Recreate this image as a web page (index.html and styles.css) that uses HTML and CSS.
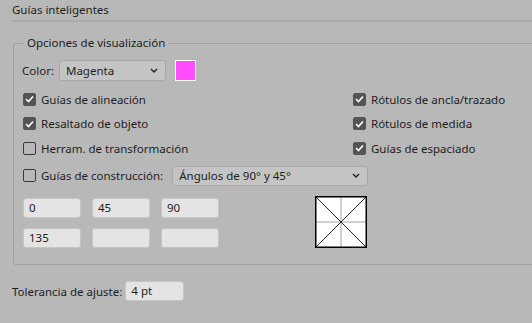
FILE: index.html
```html
<!DOCTYPE html>
<html lang="es">
<head>
    <meta charset="UTF-8">
    <title>Guías inteligentes</title>
    <link rel="stylesheet" href="styles.css">
</head>
<body>
    <div class="panel">
        <div class="section-title">Guías inteligentes</div>

        <fieldset class="group">
            <legend>Opciones de visualización</legend>

            <div class="color-row">
                <span class="label">Color:</span>
                <div class="select select-color">
                    <span>Magenta</span>
                    <svg class="chevron" width="8" height="5" viewBox="0 0 8 5"><path d="M1 1l3 3 3-3" fill="none" stroke="#222" stroke-width="1.4"/></svg>
                </div>
                <span class="swatch"></span>
            </div>

            <div class="checks">
                <div class="check-col">
                    <label class="check-row"><span class="box checked"><svg width="9" height="8" viewBox="0 0 9 8"><path d="M1 4l2.5 2.5L8 1.5" fill="none" stroke="#fff" stroke-width="1.6"/></svg></span>Guías de alineación</label>
                    <label class="check-row"><span class="box checked"><svg width="9" height="8" viewBox="0 0 9 8"><path d="M1 4l2.5 2.5L8 1.5" fill="none" stroke="#fff" stroke-width="1.6"/></svg></span>Resaltado de objeto</label>
                    <label class="check-row"><span class="box"></span>Herram. de transformación</label>
                </div>
                <div class="check-col">
                    <label class="check-row"><span class="box checked"><svg width="9" height="8" viewBox="0 0 9 8"><path d="M1 4l2.5 2.5L8 1.5" fill="none" stroke="#fff" stroke-width="1.6"/></svg></span>Rótulos de ancla/trazado</label>
                    <label class="check-row"><span class="box checked"><svg width="9" height="8" viewBox="0 0 9 8"><path d="M1 4l2.5 2.5L8 1.5" fill="none" stroke="#fff" stroke-width="1.6"/></svg></span>Rótulos de medida</label>
                    <label class="check-row"><span class="box checked"><svg width="9" height="8" viewBox="0 0 9 8"><path d="M1 4l2.5 2.5L8 1.5" fill="none" stroke="#fff" stroke-width="1.6"/></svg></span>Guías de espaciado</label>
                </div>
            </div>

            <div class="construct-row">
                <label class="check-row"><span class="box"></span>Guías de construcción:</label>
                <div class="select select-angles">
                    <span>Ángulos de 90° y 45°</span>
                    <svg class="chevron" width="8" height="5" viewBox="0 0 8 5"><path d="M1 1l3 3 3-3" fill="none" stroke="#222" stroke-width="1.4"/></svg>
                </div>
            </div>

            <div class="angles">
                <div class="angle-grid">
                    <div class="field">0</div>
                    <div class="field">45</div>
                    <div class="field">90</div>
                    <div class="field">135</div>
                    <div class="field"></div>
                    <div class="field"></div>
                </div>
                <svg class="preview" width="52" height="52" viewBox="0 0 52 52">
                    <rect x="0" y="0" width="52" height="52" fill="#fff"/>
                    <line x1="26" y1="1" x2="26" y2="51" stroke="#c2c2c2" stroke-width="1.5"/>
                    <line x1="1" y1="26" x2="51" y2="26" stroke="#c2c2c2" stroke-width="1.5"/>
                    <line x1="1" y1="1" x2="51" y2="51" stroke="#111" stroke-width="0.9"/>
                    <line x1="51" y1="1" x2="1" y2="51" stroke="#111" stroke-width="0.9"/>
                    <rect x="0.75" y="0.75" width="50.5" height="50.5" fill="none" stroke="#000" stroke-width="1.5"/>
                </svg>
            </div>
        </fieldset>

        <div class="tolerance-row">
            <span class="label">Tolerancia de ajuste:</span>
            <div class="field field-tol">4 pt</div>
        </div>
    </div>
</body>
</html>
```

FILE: styles.css
```css
body {
    margin: 0;
    background-color: #b8b8b8;
    font-family: "Noto Sans", sans-serif;
    font-size: 11.5px;
    color: #1e1e1e;
    overflow: hidden;
}
.panel {
    padding: 2px 0 0 12px;
}
.section-title {
    height: 18px;
    line-height: 16px;
    border-bottom: 2px solid #a9a9a9;
}
.group {
    margin: 14px -10px 0 1px;
    padding: 10px 0 16px 8px;
    border: 1px solid #a3a3a3;
    border-radius: 3px;
}
.group legend {
    padding: 0 3px;
    margin-left: 2px;
    line-height: 14px;
}
.color-row {
    display: flex;
    align-items: center;
    height: 21px;
}
.label {
    margin-right: 5px;
}
.select {
    display: flex;
    align-items: center;
    justify-content: space-between;
    height: 19px;
    padding: 0 7px 0 6px;
    background-color: #c4c4c4;
    border: 1px solid #a9a9a9;
    border-radius: 3px;
    box-sizing: border-box;
}
.select-color {
    width: 107px;
    height: 21px;
}
.swatch {
    width: 19px;
    height: 19px;
    margin-left: 9px;
    background-color: #ff4cff;
    border: 1px solid #fff;
}
.checks {
    display: flex;
    margin-top: 6px;
}
.check-col {
    display: flex;
    flex-direction: column;
}
.check-col:first-child {
    width: 330px;
}
.check-row {
    display: flex;
    align-items: center;
    height: 24.5px;
    white-space: nowrap;
}
.box {
    width: 11px;
    height: 11px;
    margin: 0 5px 0 1px;
    border: 1px solid #3a3a3a;
    border-radius: 2px;
    display: flex;
    align-items: center;
    justify-content: center;
    flex-shrink: 0;
}
.box.checked {
    background-color: #545454;
    border-color: #545454;
}
.construct-row {
    display: flex;
    align-items: center;
    margin-top: 3px;
}
.select-angles {
    width: 196px;
    height: 20px;
    margin-left: 9px;
}
.angles {
    display: flex;
    align-items: flex-start;
    margin-top: 10px;
}
.angle-grid {
    display: grid;
    grid-template-columns: repeat(3, 58px);
    column-gap: 11px;
    row-gap: 10px;
    margin-left: 1px;
}
.field {
    height: 20px;
    line-height: 18px;
    padding: 0 5px;
    box-sizing: border-box;
    background-color: #e4e4e4;
    border: 1px solid #c6c6c6;
    border-radius: 3px;
}
.preview {
    margin-left: 96px;
    margin-top: -2px;
}
.tolerance-row {
    display: flex;
    align-items: center;
    margin-top: 16px;
}
.tolerance-row .label {
    margin-right: 3px;
}
.field-tol {
    width: 59px;
}
```
